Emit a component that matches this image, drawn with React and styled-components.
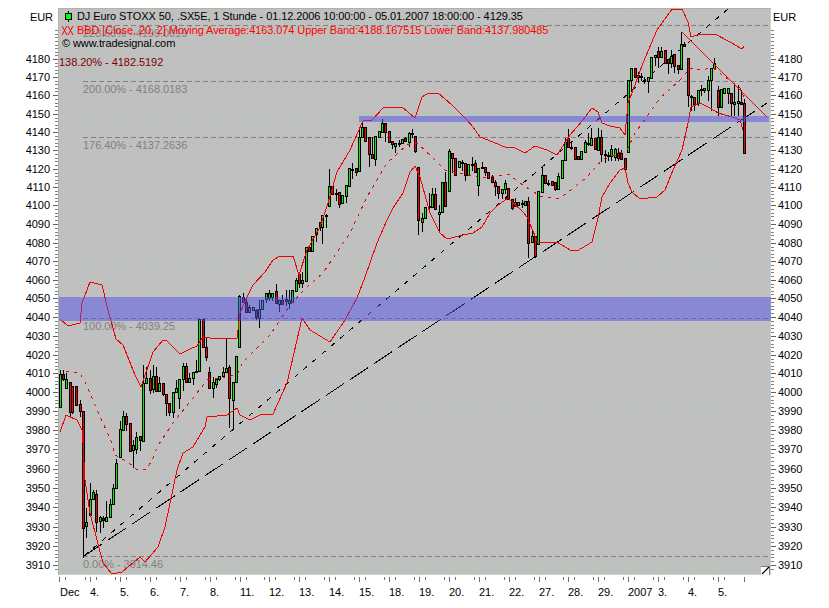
import styled, { createGlobalStyle } from 'styled-components';

const GlobalStyle = createGlobalStyle`
  html, body { margin: 0; padding: 0; background: #fff; }
  body { font-family: "Liberation Sans", Arial, sans-serif; }
`;

const Page = styled.div`
  width: 829px;
  height: 608px;
  box-sizing: border-box;
  padding-top: 8px;
  display: grid;
  grid-template-columns: 58px 713px 58px;
  grid-template-rows: 567px 33px;
  background: #fff;
  overflow: hidden;
`;

const PlotArea = styled.div`
  position: relative;
  width: 713px;
  height: 567px;
  background: #c0c0c0;
  box-shadow: inset 0 1px 0 #a9b8a5, inset 1px 0 0 #a9b8a5, inset -1px 0 0 #c4d4c0, inset 0 -1px 0 #c4d4c0;
`;

const ChartSvg = styled.svg`
  display: block;
  font-family: "Liberation Sans", Arial, sans-serif;
  font-size: 11px;
  letter-spacing: -0.05px;
`;

const Legend = styled.div`
  position: absolute;
  top: 2px;
  left: 4px;
  display: flex;
  flex-direction: column;
  font-size: 11px;
  letter-spacing: -0.09px;
  line-height: 13.5px;
  white-space: nowrap;
`;

const LegendRow = styled.div`
  display: flex;
  align-items: center;
  gap: 3px;
  color: ${p => p.$color || '#000'};
`;

const HandleCorner = styled.svg`
  position: absolute;
  right: 1px;
  bottom: 0;
  display: block;
`;

const FONT_UP = 4;

// price axis: label y positions are not even, the scale is logarithmic
const prices = [4180, 4170, 4160, 4150, 4140, 4130, 4120, 4110, 4100, 4090, 4080, 4070, 4060, 4050, 4040, 4030, 4020, 4010, 4000, 3990, 3980, 3970, 3960, 3950, 3940, 3930, 3920, 3910];
const priceY = [59, 77, 95, 114, 132, 150, 169, 187, 205, 224, 243, 261, 280, 298, 317, 336, 355, 373, 392, 411, 430, 449, 469, 488, 507, 527, 546, 565];

const minorTicks = [];
for (let y = 59 - 3.6; y >= 29; y -= 3.6) minorTicks.push(Math.round(y));
priceY.forEach((y, i) => {
  const next = priceY[i + 1];
  if (!next) return;
  for (let k = 1; k < 5; k++) minorTicks.push(Math.round(y + ((next - y) * k) / 5));
});
minorTicks.push(569);

const dayLines = Array.from({ length: 22 }, (_, k) => Math.round(90 + 29.9 * k));
const dayLabels = ['4.', '5.', '6.', '7.', '8.', '11.', '12.', '13.', '14.', '15.', '18.', '19.', '20.', '21.', '22.', '27.', '28.', '29.', '2007', '3.', '4.', '5.'];
const gridRows = [113, 261, 411, 565];

const fibLines = [25, 81, 137, 318, 556];
const fibLabels = [
  { y: 33, text: '223.60% - 4199.0019' },
  { y: 89, text: '200.00% - 4168.0183' },
  { y: 145, text: '176.40% - 4137.2636' },
  { y: 326, text: '100.00% - 4039.25' },
  { y: 564, text: '0.00% - 3914.46' },
];

// candles read from the chart: [x, bodyTop, bodyBottom, wickTop, wickBottom, colour], scaled 3x around an origin
const place = (ox, oy, rows) =>
  rows.map(([x, t, b, wt, wb, c]) => ({
    x: Math.round(ox + x / 3),
    top: Math.round(oy + t / 3),
    bottom: Math.round(oy + b / 3),
    wickTop: Math.round(oy + wt / 3),
    wickBottom: Math.round(oy + wb / 3),
    up: c === 'g',
  }));

const candles = [
  ...place(40, 280, [
    [61, 283, 380, 270, 380, 'g'], [70, 283, 297, 270, 300, 'r'], [79, 297, 323, 280, 323, 'g'],
    [91, 307, 397, 307, 405, 'r'], [97, 318, 395, 318, 400, 'r'], [107, 318, 375, 318, 375, 'r'],
    [121, 373, 392, 360, 408, 'r'],
  ]),
  ...place(40, 440, [
    [130, -88, 265, -88, 350, 'r'], [139, 247, 257, 205, 290, 'g'], [151, 178, 226, 130, 226, 'g'],
    [160, 157, 178, 150, 178, 'g'], [169, 163, 245, 150, 272, 'r'], [181, 232, 243, 228, 275, 'g'],
    [190, 233, 240, 228, 260, 'r'], [199, 230, 243, 183, 243, 'g'], [211, 193, 230, 177, 230, 'g'],
    [220, 145, 193, 133, 193, 'g'], [229, 70, 145, 57, 145, 'g'], [241, -32, 50, -58, 50, 'g'],
  ]),
  ...place(40, 280, [
    [250, 408, 450, 393, 450, 'g'], [259, 408, 433, 400, 450, 'r'], [271, 430, 512, 430, 512, 'r'],
    [280, 495, 510, 480, 560, 'g'], [289, 470, 507, 455, 520, 'g'], [301, 468, 480, 468, 510, 'r'],
    [310, 310, 484, 255, 484, 'g'], [319, 293, 310, 262, 310, 'g'], [331, 295, 330, 270, 340, 'r'],
    [340, 287, 328, 255, 335, 'g'], [349, 287, 332, 260, 332, 'r'], [358, 310, 332, 290, 332, 'g'],
    [370, 310, 342, 310, 345, 'r'], [379, 342, 370, 342, 405, 'r'], [388, 368, 395, 368, 405, 'r'],
    [400, 337, 395, 337, 412, 'g'], [409, 325, 337, 300, 337, 'g'], [418, 297, 355, 297, 385, 'g'],
    [430, 258, 298, 250, 330, 'g'], [439, 258, 307, 250, 307, 'r'], [448, 295, 305, 280, 305, 'g'],
    [460, 277, 295, 277, 312, 'g'], [469, 272, 277, 240, 277, 'g'], [478, 118, 272, 118, 272, 'g'],
    [490, 118, 200, 118, 200, 'r'], [499, 200, 232, 175, 240, 'r'], [508, 275, 323, 260, 325, 'r'],
    [520, 307, 325, 290, 350, 'g'], [529, 297, 313, 297, 320, 'g'], [538, 288, 298, 288, 300, 'g'],
    [550, 277, 287, 262, 287, 'g'], [559, 265, 277, 178, 277, 'g'], [568, 262, 355, 255, 440, 'r'],
    [580, 305, 360, 305, 448, 'g'], [589, 227, 305, 227, 305, 'g'], [598, 48, 202, 45, 202, 'g'],
    [610, 52, 67, 40, 67, 'r'], [619, 67, 97, 55, 97, 'r'], [628, 82, 97, 75, 97, 'g'],
    [640, 82, 90, 82, 90, 'g'], [649, 90, 112, 88, 118, 'r'], [658, 88, 113, 60, 140, 'g'],
    [667, 60, 88, 60, 88, 'g'], [679, 40, 57, 40, 65, 'g'], [688, 40, 55, 30, 60, 'g'],
    [697, 40, 52, 40, 60, 'g'], [709, 33, 68, 12, 68, 'r'], [718, 60, 72, 60, 92, 'g'],
    [727, 60, 72, 45, 72, 'r'], [739, 58, 62, 30, 75, 'g'], [748, 60, 68, 30, 85, 'g'],
    [757, 30, 65, 30, 65, 'g'], [769, 0, 33, -5, 33, 'g'],
  ]),
  ...place(240, 100, [
    [178, 522, 550, 520, 560, 'r'], [187, 540, 548, 515, 560, 'g'], [199, 440, 542, 440, 542, 'g'],
    [208, 442, 452, 442, 452, 'r'], [217, 408, 452, 408, 452, 'g'], [228, 383, 403, 383, 423, 'g'],
    [240, 365, 380, 365, 390, 'r'], [247, 345, 380, 345, 428, 'g'], [259, 345, 347, 343, 380, 'g'],
    [268, 258, 317, 207, 317, 'g'], [277, 258, 282, 258, 282, 'r'], [289, 280, 281, 268, 300, 'g'],
    [298, 277, 313, 277, 322, 'r'], [307, 285, 310, 285, 310, 'g'], [319, 255, 287, 255, 305, 'g'],
    [328, 205, 258, 205, 258, 'g'], [337, 206, 207, 190, 235, 'g'], [349, 205, 215, 205, 225, 'r'],
    [358, 110, 212, 85, 212, 'g'], [367, 82, 112, 62, 112, 'g'], [376, 82, 122, 82, 122, 'r'],
    [388, 110, 163, 110, 197, 'r'], [397, 163, 175, 110, 175, 'r'], [406, 108, 177, 108, 195, 'g'],
    [418, 93, 110, 93, 110, 'g'], [427, 70, 95, 57, 95, 'g'], [436, 70, 95, 70, 122, 'r'],
    [448, 92, 125, 92, 125, 'r'], [457, 123, 133, 123, 145, 'r'], [466, 128, 137, 128, 157, 'g'],
    [478, 128, 129, 120, 137, 'g'], [487, 118, 130, 118, 130, 'g'], [496, 115, 122, 110, 122, 'r'],
    [508, 98, 125, 95, 137, 'g'], [517, 98, 103, 87, 110, 'r'], [526, 107, 152, 107, 157, 'r'],
    [535, 202, 360, 202, 402, 'r'], [547, 355, 365, 340, 392, 'g'], [556, 322, 353, 322, 353, 'g'],
    [568, 318, 320, 280, 325, 'g'], [577, 283, 320, 265, 320, 'g'], [586, 283, 327, 265, 327, 'r'],
    [598, 335, 342, 315, 395, 'g'],
  ]),
  ...place(410, 90, [
    [97, 277, 367, 277, 367, 'g'], [106, 277, 347, 245, 347, 'r'], [118, 183, 302, 178, 302, 'g'],
    [127, 190, 203, 190, 245, 'r'], [136, 203, 255, 203, 255, 'r'], [148, 213, 232, 213, 232, 'g'],
    [157, 217, 220, 210, 240, 'r'], [166, 220, 255, 220, 270, 'r'], [175, 222, 255, 222, 255, 'g'],
    [187, 221, 222, 200, 240, 'g'], [196, 218, 245, 210, 245, 'r'], [205, 235, 285, 235, 315, 'g'],
    [217, 230, 235, 215, 235, 'g'], [226, 230, 245, 230, 255, 'r'], [235, 245, 265, 245, 265, 'r'],
    [247, 262, 277, 255, 277, 'r'], [256, 277, 287, 270, 315, 'r'], [265, 287, 308, 287, 325, 'r'],
    [277, 297, 308, 297, 325, 'g'], [286, 280, 297, 270, 310, 'g'], [295, 293, 327, 293, 327, 'r'],
    [307, 327, 353, 327, 357, 'r'], [316, 337, 347, 325, 347, 'g'], [325, 335, 345, 335, 345, 'g'],
    [337, 340, 341, 330, 350, 'g'], [346, 332, 345, 332, 345, 'g'], [355, 332, 458, 320, 500, 'r'],
    [367, 438, 455, 420, 455, 'g'], [376, 438, 498, 438, 500, 'r'], [385, 303, 462, 303, 462, 'g'],
    [397, 255, 305, 232, 305, 'g'], [406, 255, 280, 255, 280, 'r'], [415, 278, 279, 270, 285, 'g'],
    [427, 272, 285, 272, 285, 'r'], [436, 275, 298, 275, 300, 'r'], [445, 258, 298, 250, 298, 'g'],
    [457, 210, 263, 210, 263, 'g'], [466, 157, 210, 145, 210, 'g'], [475, 143, 170, 118, 170, 'r'],
    [484, 170, 171, 160, 178, 'g'], [496, 170, 208, 170, 208, 'r'], [505, 198, 207, 198, 207, 'r'],
    [514, 183, 208, 183, 208, 'g'], [526, 157, 185, 150, 185, 'g'], [535, 160, 161, 130, 165, 'g'],
    [544, 145, 165, 115, 165, 'g'], [556, 143, 178, 143, 178, 'r'], [565, 140, 180, 115, 180, 'g'],
    [574, 140, 192, 120, 212, 'r'], [586, 193, 194, 180, 215, 'g'], [595, 195, 196, 185, 210, 'g'],
  ]),
  ...place(600, 0, [
    [33, 448, 467, 435, 480, 'g'], [45, 448, 472, 445, 480, 'g'], [54, 458, 475, 445, 480, 'r'],
    [63, 458, 478, 450, 478, 'r'], [76, 475, 508, 475, 508, 'r'], [85, 240, 457, 240, 457, 'g'],
    [94, 205, 240, 205, 272, 'g'], [106, 203, 232, 203, 232, 'r'], [115, 225, 232, 215, 245, 'g'],
    [124, 228, 229, 220, 240, 'r'], [133, 240, 241, 230, 250, 'g'], [145, 232, 242, 232, 275, 'g'],
    [154, 172, 235, 172, 235, 'g'], [166, 165, 170, 165, 195, 'g'], [175, 152, 170, 140, 200, 'r'],
    [184, 152, 170, 140, 170, 'g'], [196, 150, 190, 150, 190, 'r'], [205, 177, 190, 177, 218, 'r'],
    [214, 167, 190, 150, 200, 'g'], [223, 163, 197, 163, 215, 'r'], [235, 195, 208, 195, 218, 'r'],
    [244, 132, 208, 95, 208, 'g'], [253, 132, 137, 125, 137, 'r'], [265, 175, 285, 175, 318, 'r'],
    [274, 287, 288, 285, 330, 'g'], [283, 292, 313, 292, 330, 'r'], [295, 270, 310, 270, 315, 'g'],
    [304, 268, 269, 255, 285, 'g'], [313, 265, 270, 265, 275, 'g'], [325, 240, 270, 228, 300, 'g'],
    [334, 205, 240, 205, 330, 'g'], [343, 190, 205, 175, 205, 'g'], [355, 270, 322, 258, 345, 'r'],
    [364, 267, 322, 267, 322, 'g'], [373, 265, 280, 265, 280, 'g'], [385, 265, 280, 265, 310, 'g'],
    [394, 280, 310, 280, 345, 'r'], [403, 305, 313, 250, 345, 'g'], [415, 302, 310, 255, 345, 'g'],
    [424, 305, 312, 270, 312, 'r'], [433, 310, 458, 298, 460, 'r'],
  ]),
];

const upperBand = [
  [60, 319], [68, 326], [80, 323], [82, 303], [90, 282], [102, 285], [108, 310], [116, 339], [123, 345],
  [135, 375], [141, 387], [153, 352], [163, 340], [167, 341], [180, 354], [190, 349], [197, 346],
  [203, 337], [217, 339], [237, 338], [240, 313], [247, 297], [253, 285], [265, 272], [273, 260], [280, 256],
  [293, 256], [299, 275], [307, 250], [320, 227], [328, 203], [337, 172], [350, 150], [358, 132], [363, 121],
  [372, 120], [383, 108], [402, 107], [415, 118], [422, 97], [427, 94], [438, 93], [452, 105], [467, 120],
  [473, 127], [480, 137], [493, 142], [507, 148], [513, 147], [525, 153], [535, 146], [547, 150], [557, 155],
  [570, 135], [583, 120], [592, 108], [598, 112], [602, 123], [610, 126], [620, 128], [625, 135], [628, 103],
  [632, 93], [643, 63], [657, 30], [672, 9], [682, 9], [688, 22], [691, 37], [697, 35], [715, 34], [730, 42],
  [742, 49], [744, 46],
];

const lowerBand = [
  [60, 432], [66, 415], [77, 420], [82, 430], [83, 443], [85, 480], [90, 513], [97, 540], [103, 563], [112, 574],
  [122, 572], [140, 557], [145, 562], [158, 547], [165, 527], [177, 470], [183, 453], [193, 447], [205, 427],
  [207, 417], [227, 415], [237, 408], [240, 415], [250, 420], [262, 414], [273, 414], [287, 383], [297, 340],
  [302, 318], [310, 330], [330, 342], [345, 320], [357, 298], [365, 277], [377, 243], [387, 220], [393, 208],
  [403, 193], [410, 172], [415, 166], [420, 177], [430, 213], [440, 233], [447, 239], [463, 235], [473, 233],
  [482, 227], [490, 213], [498, 205], [508, 198], [523, 212], [527, 217], [538, 243], [557, 242], [570, 250],
  [577, 251], [592, 242], [598, 218], [602, 197], [610, 183], [620, 170], [625, 168], [628, 183], [632, 192],
  [640, 199], [657, 197], [665, 190], [673, 170], [682, 150], [688, 123], [691, 107], [700, 103], [710, 108],
  [718, 113], [732, 117], [740, 120], [743, 130],
];

const movingAverage = [
  [66, 371], [80, 373], [85, 382], [98, 412], [112, 443], [115, 455], [128, 462], [137, 470], [147, 469],
  [153, 458], [157, 447], [173, 423], [197, 393], [207, 380], [225, 377], [237, 375], [243, 362], [270, 335],
  [290, 305], [307, 287], [323, 273], [350, 233], [367, 197], [387, 163], [407, 145], [417, 143], [433, 158],
  [445, 170], [467, 175], [482, 178], [497, 176], [508, 174], [523, 185], [540, 196], [558, 199], [567, 193],
  [587, 177], [602, 160], [627, 150], [635, 133], [660, 98], [680, 80], [690, 68], [700, 70], [713, 68],
  [740, 88], [745, 100],
];

const toPoints = list => list.map(p => p.join(',')).join(' ');

const Candle = ({ c }) => (
  <g shapeRendering="crispEdges">
    <line x1={c.x + 0.5} x2={c.x + 0.5} y1={c.wickTop} y2={c.wickBottom + 1} stroke="#000" />
    <rect
      x={c.x - 0.5}
      y={c.top + 0.5}
      width={2}
      height={Math.max(c.bottom - c.top, 1)}
      fill={c.up ? '#00f000' : '#f00000'}
      stroke="#000"
    />
  </g>
);

const PriceAxis = ({ side }) => {
  const left = side === 'left';
  const base = left ? 58 : 771;
  const dir = left ? -1 : 1;
  return (
    <ChartSvg width={58} height={567} viewBox={`${left ? 0 : 771} 8 58 567`}>
      <text x={left ? 53 : 773} y={21} textAnchor={left ? 'end' : 'start'} fill="#000">EUR</text>
      <g shapeRendering="crispEdges">
        {minorTicks.map(y => (
          <line key={y} x1={base} x2={base + dir * 3} y1={y + 0.5} y2={y + 0.5} stroke="#808080" />
        ))}
        {priceY.map(y => (
          <line key={y} x1={base} x2={base + dir * 5} y1={y + 0.5} y2={y + 0.5} stroke="#606060" />
        ))}
      </g>
      {prices.map((p, i) => (
        <text key={p} x={left ? 50 : 778} y={priceY[i] + FONT_UP} textAnchor={left ? 'end' : 'start'} fill="#000">{p}</text>
      ))}
    </ChartSvg>
  );
};

const TimeAxis = () => (
  <ChartSvg width={713} height={33} viewBox="58 575 713 33">
    <g shapeRendering="crispEdges" stroke="#707070">
      <line x1={59.5} x2={59.5} y1={577} y2={582} />
      <line x1={65.5} x2={65.5} y1={577} y2={580} />
      <line x1={744.5} x2={744.5} y1={577} y2={582} />
      {dayLines.map(x => (
        <g key={x}>
          <line x1={x - 4.5} x2={x - 4.5} y1={577} y2={580} />
          <line x1={x + 0.5} x2={x + 0.5} y1={577} y2={582} />
          <line x1={x + 6.5} x2={x + 6.5} y1={577} y2={580} />
        </g>
      ))}
    </g>
    <text x={60} y={596} fill="#000">Dec</text>
    {dayLabels.map((t, i) => (
      <text key={i} x={dayLines[i]} y={596} fill="#000">{t}</text>
    ))}
  </ChartSvg>
);

const Plot = () => (
  <ChartSvg width={713} height={567} viewBox="58 8 713 567">
    <g shapeRendering="crispEdges" stroke="#b0c8b0">
      {dayLines.map(x => <line key={x} x1={x + 0.5} x2={x + 0.5} y1={9} y2={575} />)}
      {gridRows.map(y => <line key={y} x1={59} x2={770} y1={y + 0.5} y2={y + 0.5} />)}
    </g>
    <g shapeRendering="crispEdges" stroke="#808080" strokeDasharray="5 3">
      {fibLines.map(y => <line key={y} x1={83} x2={771} y1={y + 0.5} y2={y + 0.5} />)}
    </g>
    {fibLabels.map(f => (
      <text key={f.y} x={83} y={f.y + FONT_UP} fill="#808080">{f.text}</text>
    ))}
    <text x={59} y={66} fill="#800000">138.20% - 4182.5192</text>
    <g shapeRendering="crispEdges" stroke="#000" fill="none">
      <line x1={84} y1={556} x2={767} y2={103} strokeDasharray="22 7" />
      <line x1={84} y1={556} x2={728} y2={9} strokeDasharray="5 7" />
    </g>
    {candles.map((c, i) => <Candle key={i} c={c} />)}
    <g shapeRendering="crispEdges" fill="none" stroke="#f00000">
      <polyline points={toPoints(upperBand)} />
      <polyline points={toPoints(lowerBand)} />
      <polyline points={toPoints(movingAverage)} strokeDasharray="3 5" />
      <line x1={682} y1={32} x2={767} y2={117} />
    </g>
    <g shapeRendering="crispEdges" fill="#5050e8" fillOpacity="0.5">
      <rect x={359} y={116} width={410} height={6} />
      <rect x={59} y={297} width={712} height={24} />
    </g>
  </ChartSvg>
);

export default function App() {
  return (
    <>
      <GlobalStyle />
      <Page>
        <PriceAxis side="left" />
        <PlotArea>
          <Plot />
          <Legend>
            <LegendRow>
              <svg width="12" height="11" viewBox="0 0 12 11">
                <path d="M6.5 0v11" stroke="#000" shapeRendering="crispEdges" />
                <rect x="3.5" y="2.5" width="6" height="6" fill="#00ff00" stroke="#000" shapeRendering="crispEdges" />
              </svg>
              DJ Euro STOXX 50, .SX5E, 1 Stunde - 01.12.2006 10:00:00 - 05.01.2007 18:00:00 - 4129.35
            </LegendRow>
            <LegendRow $color="#ff0000">
              <svg width="12" height="11" viewBox="0 0 12 11">
                <path d="M0 1l5 9M5 1l-5 9M6 1l5 9M11 1l-5 9" stroke="#ff0000" fill="none" />
              </svg>
              BBD [Close, 20, 2] Moving Average:4163.074 Upper Band:4188.167515 Lower Band:4137.980485
            </LegendRow>
            <LegendRow>© www.tradesignal.com</LegendRow>
          </Legend>
          <HandleCorner width="9" height="9" viewBox="0 0 9 9">
            <rect width="9" height="9" fill="#fff" />
            <path d="M0 0h9v1H0zM8 0h1v9H8z" fill="#808080" />
            <path d="M1 8L8 1" stroke="#000" strokeWidth="1.2" />
          </HandleCorner>
        </PlotArea>
        <PriceAxis side="right" />
        <div />
        <TimeAxis />
        <div />
      </Page>
    </>
  );
}
